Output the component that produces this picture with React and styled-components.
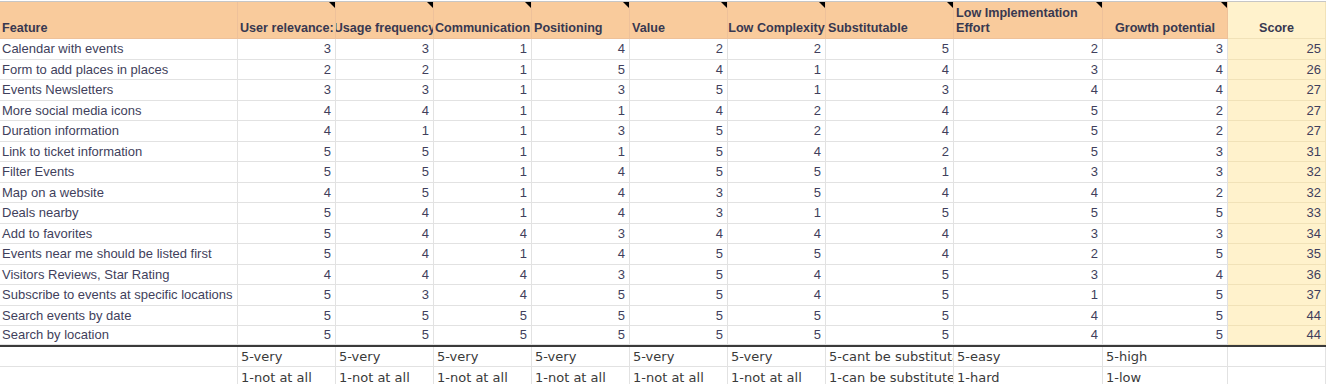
import React from 'react';
import styled, { createGlobalStyle, css } from 'styled-components';

const GlobalStyle = createGlobalStyle`
  html, body {
    margin: 0;
    padding: 0;
    background: #ffffff;
    overflow: hidden;
  }
`;

const COLUMNS = '238px 98px 98px 98px 98px 98px 98px 128px 149px 125px 98px';

const Sheet = styled.div`
  width: 1326px;
  padding-top: 1px;
  font-family: 'Liberation Sans', Arial, sans-serif;
`;

const Row = styled.div`
  display: grid;
  grid-template-columns: ${COLUMNS};
  height: ${p => p.$height || 20.5}px;
  box-sizing: border-box;
  ${p =>
    p.$header &&
    css`
      border-top: 1px solid #c6c6c6;
    `}
  ${p =>
    p.$last &&
    css`
      border-bottom: 2px solid #3a3a3a;
    `}
`;

const HeadCell = styled.div`
  position: relative;
  display: flex;
  align-items: flex-end;
  justify-content: ${p => (p.$align === 'center' ? 'center' : 'flex-start')};
  padding: 0 ${p => (p.$align === 'center' ? 0 : 2)}px 2px;
  background: ${p => (p.$score ? '#fff2cc' : '#f9cb9c')};
  border-right: 1px solid ${p => (p.$score ? '#f1e2b8' : '#eec19a')};
  border-bottom: 1px solid ${p => (p.$score ? '#f1e2b8' : '#eec19a')};
  overflow: hidden;
  color: #383850;
  font-size: 12.6px;
  font-weight: bold;
  line-height: 15px;
  box-sizing: border-box;
`;

const HeadText = styled.span`
  flex: ${p => (p.$wrap ? '0 1 auto' : 'none')};
  white-space: ${p => (p.$wrap ? 'normal' : 'nowrap')};
`;

const NoteMark = styled.span`
  position: absolute;
  top: 0;
  right: 0;
  width: 0;
  height: 0;
  border-top: 6px solid #000000;
  border-left: 6px solid transparent;
`;

const Cell = styled.div`
  display: flex;
  align-items: center;
  justify-content: ${p => (p.$num ? 'flex-end' : 'flex-start')};
  padding: 0 4px 0 ${p => (p.$num ? 0 : 2)}px;
  background: ${p => (p.$score ? '#fff2cc' : '#ffffff')};
  border-right: 1px solid ${p => (p.$score ? '#f1e2b8' : '#e2e2e2')};
  border-bottom: 1px solid ${p => (p.$score ? '#f1e2b8' : '#e2e2e2')};
  overflow: hidden;
  white-space: nowrap;
  color: #3f3f5c;
  font-size: 13px;
  box-sizing: border-box;
`;

const NoteCell = styled.div`
  display: flex;
  align-items: center;
  padding: 1px 0 0 3px;
  background: #ffffff;
  border-right: 1px solid #e2e2e2;
  border-bottom: 1px solid #e2e2e2;
  overflow: hidden;
  white-space: nowrap;
  color: #3a3a3a;
  font-family: 'DejaVu Sans', Verdana, sans-serif;
  font-size: 13px;
  box-sizing: border-box;
`;

const headers = [
  { label: 'Feature', note: false },
  { label: 'User relevance:', note: true },
  { label: 'Usage frequency', note: true, align: 'center' },
  { label: 'Communication', note: true, align: 'center' },
  { label: 'Positioning', note: true },
  { label: 'Value', note: true },
  { label: 'Low Complexity', note: true, align: 'center' },
  { label: 'Substitutable', note: true },
  { label: 'Low Implementation Effort', note: true, wrap: true },
  { label: 'Growth potential', note: true, align: 'center' },
];

const features = [
  ['Calendar with events', [3, 3, 1, 4, 2, 2, 5, 2, 3]],
  ['Form to add places in places', [2, 2, 1, 5, 4, 1, 4, 3, 4]],
  ['Events Newsletters', [3, 3, 1, 3, 5, 1, 3, 4, 4]],
  ['More social media icons', [4, 4, 1, 1, 4, 2, 4, 5, 2]],
  ['Duration information', [4, 1, 1, 3, 5, 2, 4, 5, 2]],
  ['Link to ticket information', [5, 5, 1, 1, 5, 4, 2, 5, 3]],
  ['Filter Events', [5, 5, 1, 4, 5, 5, 1, 3, 3]],
  ['Map on a website', [4, 5, 1, 4, 3, 5, 4, 4, 2]],
  ['Deals nearby', [5, 4, 1, 4, 3, 1, 5, 5, 5]],
  ['Add to favorites', [5, 4, 4, 3, 4, 4, 4, 3, 3]],
  ['Events near me should be listed first', [5, 4, 1, 4, 5, 5, 4, 2, 5]],
  ['Visitors Reviews, Star Rating', [4, 4, 4, 3, 5, 4, 5, 3, 4]],
  ['Subscribe to events at specific locations', [5, 3, 4, 5, 5, 4, 5, 1, 5]],
  ['Search events by date', [5, 5, 5, 5, 5, 5, 5, 4, 5]],
  ['Search by location', [5, 5, 5, 5, 5, 5, 5, 4, 5]],
];

const legend = [
  ['', '5-very', '5-very', '5-very', '5-very', '5-very', '5-very', '5-cant be substitutable', '5-easy', '5-high', ''],
  ['', '1-not at all', '1-not at all', '1-not at all', '1-not at all', '1-not at all', '1-not at all', '1-can be substituted', '1-hard', '1-low', ''],
];

export default function App() {
  return (
    <>
      <GlobalStyle />
      <Sheet>
        <Row $header $height={38}>
          {headers.map(h => (
            <HeadCell key={h.label} $align={h.align}>
              <HeadText $wrap={h.wrap}>{h.label}</HeadText>
              {h.note && <NoteMark />}
            </HeadCell>
          ))}
          <HeadCell $score $align="center">
            <HeadText>Score</HeadText>
          </HeadCell>
        </Row>

        {features.map(([name, values], i) => (
          <Row key={name} $last={i === features.length - 1}>
            <Cell>{name}</Cell>
            {values.map((v, j) => (
              <Cell key={j} $num>
                {v}
              </Cell>
            ))}
            <Cell $num $score>
              {values.reduce((a, b) => a + b, 0)}
            </Cell>
          </Row>
        ))}

        {legend.map((cells, i) => (
          <Row key={i}>
            {cells.map((text, j) => (
              <NoteCell key={j}>{text}</NoteCell>
            ))}
          </Row>
        ))}
      </Sheet>
    </>
  );
}
